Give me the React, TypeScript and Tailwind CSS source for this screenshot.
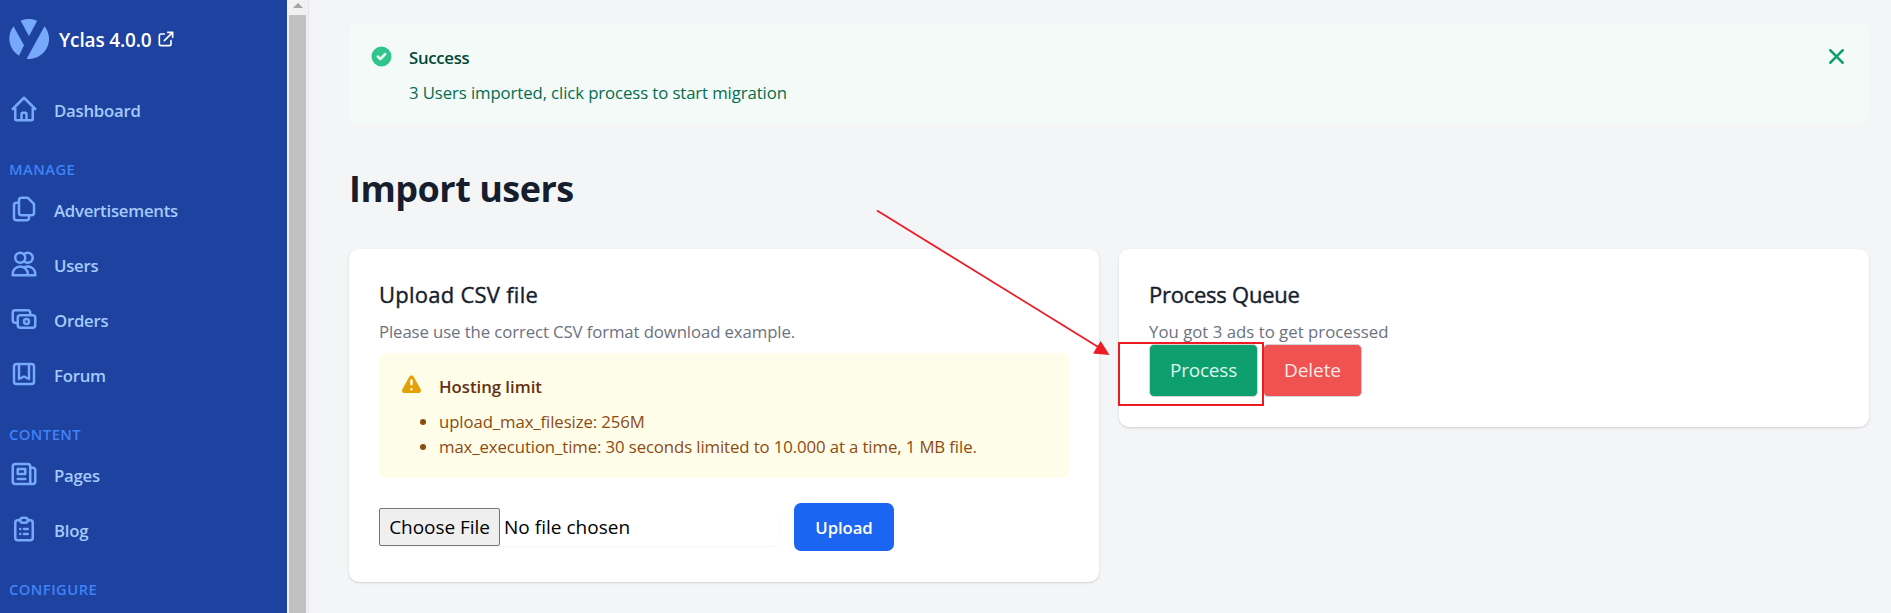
import type { ReactNode } from "react";

const icons = {
  home: "M3 12l9-9 9 9M5 10v10a1 1 0 001 1h3a1 1 0 001-1v-4a1 1 0 011-1h2a1 1 0 011 1v4a1 1 0 001 1h3a1 1 0 001-1V10M9 21h6",
  duplicate:
    "M8 7v8a2 2 0 002 2h6M8 7V5a2 2 0 012-2h4.586a1 1 0 01.707.293l4.414 4.414a1 1 0 01.293.707V15a2 2 0 01-2 2h-2M8 7H6a2 2 0 00-2 2v10a2 2 0 002 2h8a2 2 0 002-2v-2",
  users:
    "M12 4.354a4 4 0 110 5.292M15 21H3v-1a6 6 0 0112 0v1zm0 0h6v-1a6 6 0 00-9-5.197M13 7a4 4 0 11-8 0 4 4 0 018 0z",
  cash: "M17 9V7a2 2 0 00-2-2H5a2 2 0 00-2 2v6a2 2 0 002 2h2m2 4h10a2 2 0 002-2v-6a2 2 0 00-2-2H9a2 2 0 00-2 2v6a2 2 0 002 2zm7-5a2 2 0 11-4 0 2 2 0 014 0z",
  bookmark:
    "M16 4v12l-4-2-4 2V4M6 20h12a2 2 0 002-2V6a2 2 0 00-2-2H6a2 2 0 00-2 2v12a2 2 0 002 2z",
  newspaper:
    "M19 20H5a2 2 0 01-2-2V6a2 2 0 012-2h10a2 2 0 012 2v1m2 13a2 2 0 01-2-2V7m2 13a2 2 0 002-2V9a2 2 0 00-2-2h-2m-4-3H9M7 16h6M7 8h6v4H7V8z",
  clipboard:
    "M9 5H7a2 2 0 00-2 2v12a2 2 0 002 2h10a2 2 0 002-2V7a2 2 0 00-2-2h-2M9 5a2 2 0 002 2h2a2 2 0 002-2M9 5a2 2 0 012-2h2a2 2 0 012 2m-3 7h3m-3 4h3m-6-4h.01M9 16h.01",
  external:
    "M10 6H6a2 2 0 00-2 2v10a2 2 0 002 2h10a2 2 0 002-2v-4M14 4h6m0 0v6m0-6L10 14",
};

function Outline({ d, className }: { d: string; className: string }) {
  return (
    <svg
      viewBox="0 0 24 24"
      fill="none"
      stroke="currentColor"
      strokeWidth="2"
      strokeLinecap="round"
      strokeLinejoin="round"
      className={className}
    >
      <path d={d} />
    </svg>
  );
}

function Solid({ d, className }: { d: string; className: string }) {
  return (
    <svg viewBox="0 0 20 20" fill="currentColor" className={className}>
      <path fillRule="evenodd" clipRule="evenodd" d={d} />
    </svg>
  );
}

function Logo() {
  return (
    <svg viewBox="0 0 120 120" fill="#76a9fa" className="size-10 shrink-0">
      <path d="M35 5.5A60 60 0 0 1 84.500 5.500L60 52Z" />
      <path d="M13.500 22L45 79L30 110A60 60 0 0 1 13.500 22Z" />
      <path d="M106.500 22A60 60 0 0 1 53 119.600Z" />
    </svg>
  );
}

function NavItem({ icon, children }: { icon: string; children: ReactNode }) {
  return (
    <a className="flex h-[30px] items-center text-[#a4cafe]">
      <Outline d={icon} className="size-[30px] shrink-0 text-[#76a9fa]" />
      <span className="ml-[15px] pt-[2px] text-[16.75px] leading-[25px] font-semibold tracking-[-0.25px]">
        {children}
      </span>
    </a>
  );
}

function NavHeading({ children }: { children: ReactNode }) {
  return (
    <h3 className="mt-[35px] mb-[15px] text-[14.75px] leading-5 font-semibold tracking-[0.45px] text-[#3f83f8]">
      {children}
    </h3>
  );
}

function Sidebar() {
  return (
    <aside className="h-full w-[287px] shrink-0 overflow-hidden bg-[#1e429f] pt-[19px] pl-[9px]">
      <div className="flex h-10 items-center">
        <Logo />
        <span className="ml-[10px] w-[92px] pt-[2px] text-[19px] leading-[25px] font-semibold tracking-[-0.15px] whitespace-nowrap text-white">
          Yclas 4.0.0
        </span>
        <Outline d={icons.external} className="ml-[4.500px] size-5 text-white" />
      </div>
      <nav className="mt-[35px]">
        <NavItem icon={icons.home}>Dashboard</NavItem>
        <NavHeading>MANAGE</NavHeading>
        <div className="flex flex-col gap-[25px]">
          <NavItem icon={icons.duplicate}>Advertisements</NavItem>
          <NavItem icon={icons.users}>Users</NavItem>
          <NavItem icon={icons.cash}>Orders</NavItem>
          <NavItem icon={icons.bookmark}>Forum</NavItem>
        </div>
        <NavHeading>CONTENT</NavHeading>
        <div className="flex flex-col gap-[25px]">
          <NavItem icon={icons.newspaper}>Pages</NavItem>
          <NavItem icon={icons.clipboard}>Blog</NavItem>
        </div>
        <NavHeading>CONFIGURE</NavHeading>
      </nav>
    </aside>
  );
}

function Scrollbar() {
  return (
    <div className="flex h-full w-[22px] shrink-0 flex-col items-center border-r border-[#e5e7eb] bg-[#f1f1f1]">
      <svg viewBox="0 0 10 5" className="mt-[3px] mb-[7px] h-[5px] w-[10px] shrink-0">
        <path d="M5 0L10 5H0Z" fill="#a3a3a3" />
      </svg>
      <div className="w-[17px] flex-1 bg-[#c1c1c1]" />
    </div>
  );
}

function SuccessAlert() {
  return (
    <section className="flex h-[100px] items-start rounded-[7px] bg-[#f3faf7] p-5">
      <Solid
        className="size-[25px] shrink-0 text-[#31c48d]"
        d="M10 18a8 8 0 100-16 8 8 0 000 16zm3.707-9.293a1 1 0 00-1.414-1.414L9 10.586 7.707 9.293a1 1 0 00-1.414 1.414l2 2a1 1 0 001.414 0l4-4z"
      />
      <div className="ml-[15px] flex-1 pt-px text-[16.75px] leading-[25px]">
        <h3 className="font-semibold tracking-[-0.3px] text-[#014737]">Success</h3>
        <p className="mt-[10px] tracking-[-0.1px] text-[#046c4e]">
          3 Users imported, click process to start migration
        </p>
      </div>
      <Solid
        className="size-[25px] shrink-0 text-[#0e9f6e]"
        d="M4.293 4.293a1 1 0 011.414 0L10 8.586l4.293-4.293a1 1 0 111.414 1.414L11.414 10l4.293 4.293a1 1 0 01-1.414 1.414L10 11.414l-4.293 4.293a1 1 0 01-1.414-1.414L8.586 10 4.293 5.707a1 1 0 010-1.414z"
      />
    </section>
  );
}

function HostingLimit() {
  return (
    <div className="mt-[9px] flex h-[125px] items-start rounded-[7px] bg-[#fdfdea] p-5">
      <Solid
        className="size-[25px] shrink-0 text-[#e3a008]"
        d="M8.257 3.099c.765-1.36 2.722-1.36 3.486 0l5.58 9.92c.75 1.334-.213 2.98-1.742 2.98H4.42c-1.53 0-2.493-1.646-1.743-2.98l5.58-9.92zM11 13a1 1 0 11-2 0 1 1 0 012 0zm-1-8a1 1 0 00-1 1v3a1 1 0 002 0V6a1 1 0 00-1-1z"
      />
      <div className="ml-[15px] pt-px text-[16.75px] leading-[25px]">
        <h4 className="font-semibold tracking-[-0.02px] text-[#633112]">Hosting limit</h4>
        <ul className="mt-[10px] -ml-5 text-[#8e4b10]">
          <li className="flex items-center">
            <span className="mr-[13px] ml-px size-[6px] rounded-full bg-[#8e4b10]" />
            <span className="tracking-[-0.1px]">upload_max_filesize: 256M</span>
          </li>
          <li className="flex items-center">
            <span className="mr-[13px] ml-px size-[6px] rounded-full bg-[#8e4b10]" />
            <span className="tracking-[-0.1px]">
              max_execution_time: 30 seconds limited to 10.000 at a time, 1 MB file.
            </span>
          </li>
        </ul>
      </div>
    </div>
  );
}

function UploadForm() {
  return (
    <form className="mt-[25px] flex h-12 items-center">
      <div className="flex h-[38px] w-[400px] items-center rounded-[7px] text-[19px] text-black shadow-[0_1px_2px_0_rgba(0,0,0,0.05)]">
        <button
          type="button"
          className="h-[38px] w-[121px] rounded-[2px] border border-[#767676] bg-[#efefef] tracking-[-0.05px] whitespace-nowrap"
        >
          Choose File
        </button>
        <span className="ml-1 tracking-[0.02px]">No file chosen</span>
      </div>
      <button
        type="button"
        className="ml-[15px] h-12 w-[100px] rounded-[7px] bg-[#1c64f2] pt-px text-[16.75px] font-semibold tracking-[-0.1px] text-white"
      >
        Upload
      </button>
    </form>
  );
}

function Card({
  title,
  titleClass,
  text,
  textClass,
  className,
  children,
}: {
  title: string;
  titleClass: string;
  text: string;
  textClass: string;
  className: string;
  children: ReactNode;
}) {
  return (
    <section
      className={`flex flex-col rounded-[10px] bg-white px-[30px] pt-[30px] shadow-[0_1px_3px_0_rgba(0,0,0,0.1),0_1px_2px_0_rgba(0,0,0,0.06)] ${className}`}
    >
      <h2
        className={`text-[22px] leading-[30px] text-[#161e2e] [-webkit-text-stroke:0.4px_#161e2e] ${titleClass}`}
      >
        {title}
      </h2>
      <p className={`mt-[10px] text-[16.75px] leading-[25px] text-[#6b7280] ${textClass}`}>
        {text}
      </p>
      {children}
    </section>
  );
}

function QueueActions() {
  return (
    <div className="relative flex gap-[5px]">
      <button
        type="button"
        className="h-[53px] w-[109px] rounded-[5px] border border-[#d2d6dc] bg-[#0e9f6e] text-[19px] tracking-[-0.2px] text-[#def7ec]"
      >
        Process
      </button>
      <button
        type="button"
        className="h-[53px] w-[99px] rounded-[5px] border border-[#d2d6dc] bg-[#f05252] text-[19px] tracking-[-0.1px] text-[#fde8e8]"
      >
        Delete
      </button>
      <div className="absolute -top-[2px] -left-[31px] h-[64px] w-[146px] border-2 border-[#ed1c24]" />
      <svg
        viewBox="0 0 236 150"
        className="pointer-events-none absolute -top-[137px] -left-[274px] h-[150px] w-[236px]"
      >
        <path d="M2 3.500L224 140.500" stroke="#ed1c24" strokeWidth="1.800" fill="none" />
        <path d="M234.500 148L225.700 134L218 146.500Z" fill="#ed1c24" />
      </svg>
    </div>
  );
}

export default function App() {
  return (
    <div className="flex h-[613px] w-full overflow-hidden bg-[#f4f5f7] font-['Open_Sans','Noto_Sans',sans-serif]">
      <Sidebar />
      <Scrollbar />
      <main className="min-w-0 flex-1 pt-6 pr-[22px] pl-10">
        <SuccessAlert />
        <h1 className="mt-[42px] text-[36px] leading-[45px] font-bold tracking-[-0.5px] text-[#161e2e]">
          Import users
        </h1>
        <div className="mt-[38px] grid grid-cols-2 items-start gap-5">
          <Card
            title="Upload CSV file"
            titleClass="tracking-[0.25px]"
            text="Please use the correct CSV format download example."
            textClass="tracking-[-0.1px]"
            className="h-[333px]"
          >
            <HostingLimit />
            <UploadForm />
          </Card>
          <Card
            title="Process Queue"
            titleClass="tracking-[-0.25px]"
            text="You got 3 ads to get processed"
            textClass="tracking-[0.02px]"
            className="h-[178px]"
          >
            <QueueActions />
          </Card>
        </div>
      </main>
    </div>
  );
}
